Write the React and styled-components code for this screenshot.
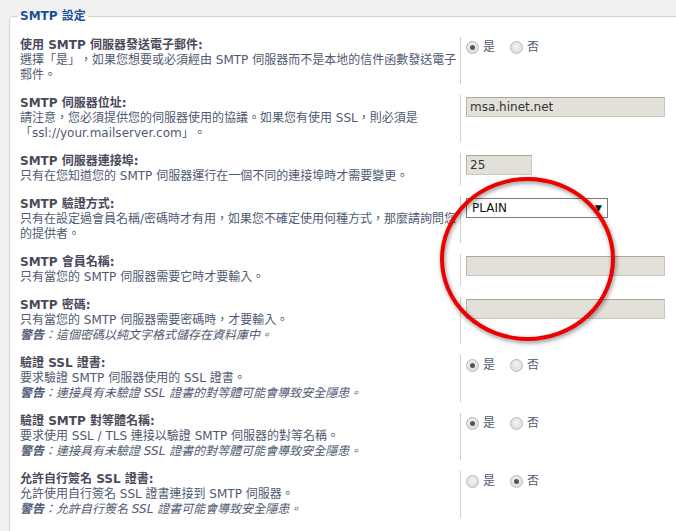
import React from "react";
import styled, { createGlobalStyle } from "styled-components";

const Global = createGlobalStyle`
  html, body {
    margin: 0;
    padding: 0;
    background: #f1f1f1;
    overflow: hidden;
  }
  body {
    font-family: "DejaVu Sans", Verdana, "Noto Sans CJK TC", sans-serif;
    font-size: 12px;
    text-spacing-trim: space-all;
  }
`;

const Page = styled.div`
  position: relative;
  width: 676px;
  height: 531px;
  padding: 9px 0 0 9px;
  box-sizing: border-box;
  overflow: hidden;
`;

const Fieldset = styled.fieldset`
  margin: 0;
  width: 720px;
  min-height: 600px;
  box-sizing: border-box;
  padding: 13px 10px 0 10px;
  border: 1px solid #d2d2d2;
  border-radius: 4px;
  background: #ffffff;
`;

const Legend = styled.legend`
  padding: 0 2px;
  margin-left: -2px;
  font-weight: bold;
  font-size: 12px;
  line-height: 15px;
  color: #1d4f9c;
`;

const Row = styled.div`
  display: grid;
  grid-template-columns: 440px 1fr;
  margin-bottom: 11px;
`;

const Label = styled.div`
  padding: 1px 0;
  line-height: 15px;
`;

const Title = styled.div`
  font-weight: bold;
  color: #4a4a5a;
`;

const Desc = styled.div`
  color: #4f5a72;
`;

const Warn = styled.div`
  color: #4f5a72;
  font-style: italic;
  b {
    font-weight: bold;
  }
`;

const Control = styled.div`
  border-left: 1px solid #cfcfcf;
  padding: 2px 0 0 5px;
`;

const TextInput = styled.input`
  display: block;
  box-sizing: border-box;
  width: ${(p) => p.$w}px;
  height: 20px;
  margin: 0;
  padding: 0 3px;
  border: 1px solid #c9c6bf;
  border-top-color: #aaa7a0;
  border-left-color: #b8b5ae;
  background: #e3e0da;
  font-family: "DejaVu Sans", Verdana, sans-serif;
  font-size: 12px;
  color: #333;
  outline: none;
`;

const Select = styled.div`
  box-sizing: border-box;
  width: 142px;
  height: 20px;
  border: 1px solid #7a7a7a;
  background: #fff;
  display: flex;
  align-items: center;
  justify-content: space-between;
  padding: 0 5px 0 5px;
  font-family: "DejaVu Sans", Verdana, sans-serif;
  font-size: 12px;
  color: #111;
`;

const Arrow = styled.span`
  font-size: 9px;
  color: #111;
`;

const Radios = styled.div`
  display: flex;
  align-items: center;
  gap: 15px;
  padding-top: 1px;
`;

const RadioLabel = styled.label`
  display: flex;
  align-items: center;
  gap: 4px;
  color: #4f5a72;
  font-size: 12px;
  line-height: 15px;
`;

const Radio = styled.span`
  width: 13px;
  height: 13px;
  box-sizing: border-box;
  border-radius: 50%;
  border: 1px solid #b9b9b9;
  background: radial-gradient(circle at 50% 40%, #f4f4f4, #d6d6d6);
  display: flex;
  align-items: center;
  justify-content: center;
  &::after {
    content: "";
    width: 5px;
    height: 5px;
    border-radius: 50%;
    background: ${(p) => (p.$on ? "#555" : "transparent")};
  }
`;

const Circle = styled.svg`
  position: absolute;
  left: 436px;
  top: 173px;
  width: 196px;
  height: 180px;
  overflow: visible;
  filter: drop-shadow(1px 2px 2px rgba(0, 0, 0, 0.45));
`;

const YesNo = ({ yes }) => (
  <Radios>
    <RadioLabel>
      <Radio $on={yes} />是
    </RadioLabel>
    <RadioLabel>
      <Radio $on={!yes} />否
    </RadioLabel>
  </Radios>
);

const rows = [
  {
    t: "使用 SMTP 伺服器發送電子郵件:",
    d: "選擇「是」，如果您想要或必須經由 SMTP 伺服器而不是本地的信件函數發送電子郵件。",
    c: <YesNo yes />,
  },
  {
    t: "SMTP 伺服器位址:",
    d: "請注意，您必須提供您的伺服器使用的協議。如果您有使用 SSL，則必須是「ssl://your.mailserver.com」。",
    c: <TextInput $w={199} defaultValue="msa.hinet.net" />,
  },
  {
    t: "SMTP 伺服器連接埠:",
    d: "只有在您知道您的 SMTP 伺服器運行在一個不同的連接埠時才需要變更。",
    c: <TextInput $w={66} defaultValue="25" />,
  },
  {
    t: "SMTP 驗證方式:",
    d: "只有在設定過會員名稱/密碼時才有用，如果您不確定使用何種方式，那麼請詢問您的提供者。",
    c: (
      <Select>
        PLAIN<Arrow>▼</Arrow>
      </Select>
    ),
  },
  {
    t: "SMTP 會員名稱:",
    d: "只有當您的 SMTP 伺服器需要它時才要輸入。",
    c: <TextInput $w={199} defaultValue="" />,
  },
  {
    t: "SMTP 密碼:",
    d: "只有當您的 SMTP 伺服器需要密碼時，才要輸入。",
    w: "這個密碼以純文字格式儲存在資料庫中。",
    c: <TextInput $w={199} defaultValue="" />,
  },
  {
    t: "驗證 SSL 證書:",
    d: "要求驗證 SMTP 伺服器使用的 SSL 證書。",
    w: "連接具有未驗證 SSL 證書的對等體可能會導致安全隱患。",
    c: <YesNo yes />,
  },
  {
    t: "驗證 SMTP 對等體名稱:",
    d: "要求使用 SSL / TLS 連接以驗證 SMTP 伺服器的對等名稱。",
    w: "連接具有未驗證 SSL 證書的對等體可能會導致安全隱患。",
    c: <YesNo yes />,
  },
  {
    t: "允許自行簽名 SSL 證書:",
    d: "允許使用自行簽名 SSL 證書連接到 SMTP 伺服器。",
    w: "允許自行簽名 SSL 證書可能會導致安全隱患。",
    c: <YesNo yes={false} />,
  },
];

export default function App() {
  return (
    <>
      <Global />
      <Page>
        <Fieldset>
          <Legend>SMTP 設定</Legend>
          {rows.map((r, i) => (
            <Row key={i}>
              <Label>
                <Title>{r.t}</Title>
                <Desc>{r.d}</Desc>
                {r.w && (
                  <Warn>
                    <b>警告</b>：{r.w}
                  </Warn>
                )}
              </Label>
              <Control>{r.c}</Control>
            </Row>
          ))}
        </Fieldset>
        <Circle viewBox="0 0 196 180">
          <ellipse
            cx="91.5"
            cy="86"
            rx="85.5"
            ry="80"
            fill="none"
            stroke="#ee0000"
            strokeWidth="4"
          />
        </Circle>
      </Page>
    </>
  );
}
